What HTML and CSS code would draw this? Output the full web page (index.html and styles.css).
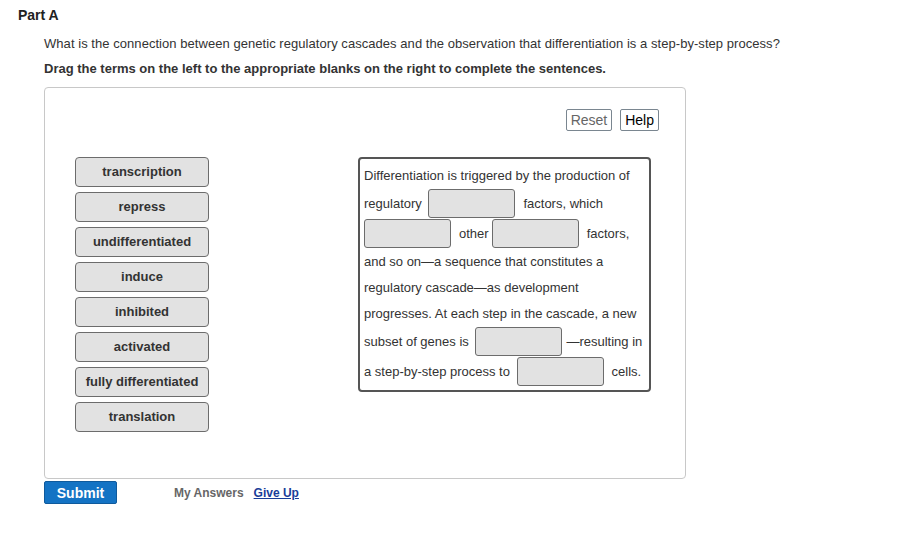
FILE: index.html
```html
<!DOCTYPE html>
<html lang="en">
<head>
    <meta charset="UTF-8">
    <title>Part A</title>
    <link rel="stylesheet" href="styles.css">
</head>
<body>
    <h2 class="part-title">Part A</h2>
    <div class="question">
        <p class="prompt">What is the connection between genetic regulatory cascades and the observation that differentiation is a step-by-step process?</p>
        <p class="instructions">Drag the terms on the left to the appropriate blanks on the right to complete the sentences.</p>

        <div class="workspace">
            <div class="toolbar">
                <button class="tool-btn reset">Reset</button>
                <button class="tool-btn">Help</button>
            </div>
            <div class="board">
                <div class="terms">
                    <div class="term">transcription</div>
                    <div class="term">repress</div>
                    <div class="term">undifferentiated</div>
                    <div class="term">induce</div>
                    <div class="term">inhibited</div>
                    <div class="term">activated</div>
                    <div class="term">fully differentiated</div>
                    <div class="term">translation</div>
                </div>
                <div class="sentences">
                    <div class="line">Differentiation is triggered by the production of</div>
                    <div class="line tall">regulatory <span class="blank near"></span><span class="after">factors, which</span></div>
                    <div class="line tall"><span class="blank"></span><span class="after">other</span><span class="blank near"></span><span class="after">factors,</span></div>
                    <div class="line">and so on—a sequence that constitutes a</div>
                    <div class="line">regulatory cascade—as development</div>
                    <div class="line">progresses. At each step in the cascade, a new</div>
                    <div class="line tall">subset of genes is <span class="blank near"></span><span class="dash">—resulting in</span></div>
                    <div class="line tall">a step-by-step process to <span class="blank near"></span><span class="after">cells.</span></div>
                </div>
            </div>
        </div>

        <div class="actions">
            <button class="submit">Submit</button>
            <span class="my-answers">My Answers</span>
            <a href="#" class="give-up">Give Up</a>
        </div>
    </div>
</body>
</html>
```

FILE: styles.css
```css
body, html {
    margin: 0;
    padding: 0;
    font-family: "Liberation Sans", Arial, sans-serif;
    color: #333;
    background-color: white;
}

.part-title {
    margin: 0;
    padding: 7px 0 0 18px;
    font-size: 14px;
    font-weight: bold;
    color: #222;
    line-height: 16px;
}

.question {
    padding-left: 44px;
    width: 642px;
}

.prompt {
    margin: 13px 0 0;
    font-size: 13px;
    line-height: 15px;
    letter-spacing: 0.05px;
    white-space: nowrap;
}

.instructions {
    margin: 10px 0 0;
    font-size: 13px;
    font-weight: bold;
    line-height: 15px;
    white-space: nowrap;
}

.workspace {
    margin-top: 11px;
    height: 390px;
    border: 1px solid #c8c8c8;
    border-radius: 4px;
}

.toolbar {
    display: flex;
    justify-content: flex-end;
    gap: 8px;
    padding: 21px 26px 0 0;
}

.tool-btn {
    height: 22px;
    padding: 0 4px;
    font-family: "Liberation Sans", Arial, sans-serif;
    font-size: 14px;
    color: #000;
    background-color: white;
    border: 1px solid #7a8690;
    border-radius: 2px;
}

.tool-btn.reset {
    color: #666;
}

.board {
    display: flex;
    margin-top: 26px;
    padding-left: 30px;
}

.terms {
    display: flex;
    flex-direction: column;
    gap: 5px;
    width: 134px;
}

.term {
    height: 28px;
    line-height: 28px;
    text-align: center;
    font-size: 13px;
    font-weight: bold;
    color: #333;
    background-color: #e2e2e2;
    border: 1px solid #6c6c6c;
    border-radius: 4px;
}

.sentences {
    margin-left: 149px;
    width: 281px;
    height: 228px;
    padding: 3px 4px 0 4px;
    border: 2px solid #555;
    border-radius: 4px;
    font-size: 13px;
}

.line {
    display: flex;
    align-items: center;
    height: 26px;
    white-space: pre;
}

.line.tall {
    height: 30px;
}

.blank {
    display: inline-block;
    width: 85px;
    height: 27px;
    background-color: #e2e2e2;
    border: 1px solid #6c6c6c;
    border-radius: 3px;
}

.blank.near {
    margin-left: 3px;
}

.after {
    margin-left: 8px;
}

.dash {
    margin-left: 4px;
}

.actions {
    display: flex;
    align-items: center;
    margin-top: 2px;
}

.submit {
    width: 73px;
    height: 23px;
    font-family: "Liberation Sans", Arial, sans-serif;
    font-size: 14px;
    font-weight: bold;
    color: white;
    background-color: #1473c4;
    border: 1px solid #0f5a9c;
    border-radius: 2px;
}

.my-answers {
    margin-left: 57px;
    font-size: 12px;
    font-weight: bold;
    color: #666;
}

.give-up {
    margin-left: 10px;
    font-size: 12px;
    font-weight: bold;
    color: #1a3d99;
}
```
